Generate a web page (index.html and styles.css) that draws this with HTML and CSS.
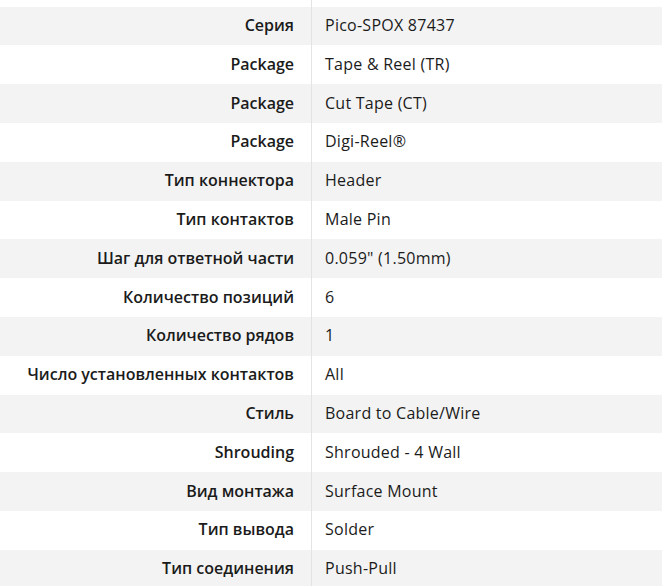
FILE: index.html
```html
<!DOCTYPE html>
<html lang="ru">
<head>
<meta charset="utf-8">
<title>Характеристики</title>
<link rel="stylesheet" href="styles.css">
</head>
<body>
<div class="specs">
  <div class="spacer"><div class="lbl-gap"></div><div></div></div>
  <div class="row"><div class="lbl">Серия</div><div class="val">Pico-SPOX 87437</div></div>
  <div class="row"><div class="lbl">Package</div><div class="val">Tape &amp; Reel (TR)</div></div>
  <div class="row"><div class="lbl">Package</div><div class="val">Cut Tape (CT)</div></div>
  <div class="row"><div class="lbl">Package</div><div class="val">Digi-Reel®</div></div>
  <div class="row"><div class="lbl">Тип коннектора</div><div class="val">Header</div></div>
  <div class="row"><div class="lbl">Тип контактов</div><div class="val">Male Pin</div></div>
  <div class="row"><div class="lbl">Шаг для ответной части</div><div class="val">0.059" (1.50mm)</div></div>
  <div class="row"><div class="lbl">Количество позиций</div><div class="val">6</div></div>
  <div class="row"><div class="lbl">Количество рядов</div><div class="val">1</div></div>
  <div class="row"><div class="lbl">Число установленных контактов</div><div class="val">All</div></div>
  <div class="row"><div class="lbl">Стиль</div><div class="val">Board to Cable/Wire</div></div>
  <div class="row"><div class="lbl">Shrouding</div><div class="val">Shrouded - 4 Wall</div></div>
  <div class="row"><div class="lbl">Вид монтажа</div><div class="val">Surface Mount</div></div>
  <div class="row"><div class="lbl">Тип вывода</div><div class="val">Solder</div></div>
  <div class="row"><div class="lbl">Тип соединения</div><div class="val">Push-Pull</div></div>
</div>
</body>
</html>
```
FILE: styles.css
```css
html, body {
  margin: 0;
  padding: 0;
  background: #ffffff;
}
body {
  font-family: "Open Sans", "Noto Sans", sans-serif;
  font-size: 16px;
  color: #1b1b1b;
}
.specs {
  display: flex;
  flex-direction: column;
  width: 662px;
}
.spacer {
  display: grid;
  grid-template-columns: 312px 1fr;
  height: 6.7px;
}
.lbl-gap {
  border-right: 1px solid #e3e3e3;
}
.row {
  display: grid;
  grid-template-columns: 312px 1fr;
  height: 38.8px;
  align-items: stretch;
}
.row:nth-of-type(even) {
  background: #f3f3f3;
}
.lbl {
  box-sizing: border-box;
  border-right: 1px solid #e3e3e3;
  font-weight: 600;
  text-align: right;
  padding-right: 17px;
  padding-bottom: 2px;
  display: flex;
  align-items: center;
  justify-content: flex-end;
  white-space: nowrap;
}
.val {
  padding-left: 13px;
  padding-bottom: 2px;
  letter-spacing: 0.25px;
  display: flex;
  align-items: center;
  white-space: nowrap;
}
```
